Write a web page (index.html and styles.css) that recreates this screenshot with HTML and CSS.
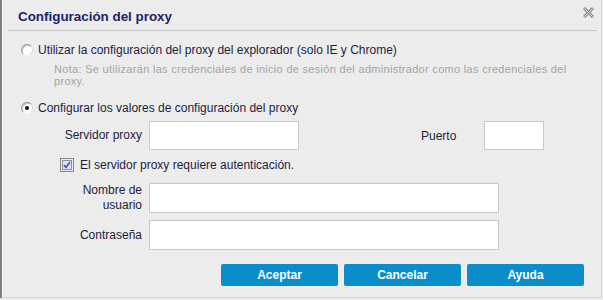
FILE: index.html
```html
<!DOCTYPE html>
<html lang="es">
<head>
    <meta charset="UTF-8">
    <meta name="viewport" content="width=device-width, initial-scale=1.0">
    <title>Configuración del proxy</title>
    <link rel="stylesheet" href="styles.css">
</head>
<body>
    <div class="dialog">
        <div class="dialog-header">
            <h1 class="dialog-title">Configuración del proxy</h1>
            <button class="close-btn" title="Cerrar">
                <svg width="11" height="11" viewBox="0 0 11 11">
                    <path d="M1 1 L10 10 M10 1 L1 10" stroke="#8a8a8a" stroke-width="3" fill="none"/>
                    <path d="M1.5 1.5 L9.5 9.5 M9.5 1.5 L1.5 9.5" stroke="#e4e4e4" stroke-width="1" fill="none"/>
                </svg>
            </button>
        </div>

        <div class="dialog-body">
            <label class="option">
                <span class="radio"></span>
                Utilizar la configuración del proxy del explorador (solo IE y Chrome)
            </label>
            <p class="note">Nota: Se utilizarán las credenciales de inicio de sesión del administrador como las credenciales del proxy.</p>

            <label class="option option-custom">
                <span class="radio checked"></span>
                Configurar los valores de configuración del proxy
            </label>

            <div class="field-row row-server">
                <label class="field-label">Servidor proxy</label>
                <input class="text-input input-server" type="text">
                <label class="port-label">Puerto</label>
                <input class="text-input input-port" type="text">
            </div>

            <label class="check-row">
                <span class="checkbox">
                    <svg width="14" height="14" viewBox="0 0 14 14">
                        <rect x="0.5" y="0.5" width="13" height="13" fill="none" stroke="#222" stroke-width="1" stroke-dasharray="1 1"/>
                        <rect x="2.5" y="2.5" width="9" height="9" fill="#dfe3ee" stroke="#8e8f99" stroke-width="1"/>
                        <path d="M4 7 L6 9.5 L10 4" stroke="#3c56a8" stroke-width="1.6" fill="none"/>
                    </svg>
                </span>
                El servidor proxy requiere autenticación.
            </label>

            <div class="field-row row-user">
                <label class="field-label">Nombre de usuario</label>
                <input class="text-input input-wide" type="text">
            </div>

            <div class="field-row row-pass">
                <label class="field-label">Contraseña</label>
                <input class="text-input input-wide" type="password">
            </div>

            <div class="button-row">
                <button class="btn">Aceptar</button>
                <button class="btn">Cancelar</button>
                <button class="btn">Ayuda</button>
            </div>
        </div>
    </div>
</body>
</html>
```

FILE: styles.css
```css
body {
    margin: 0;
    padding: 0;
    background-color: #ececec;
    border-left: 2px solid #7f7f7f;
    font-family: "Liberation Sans", Arial, sans-serif;
    color: #1e1e3c;
    overflow: hidden;
}

.dialog {
    box-sizing: border-box;
    width: 600px;
    height: 298px;
    background: #ececec;
    border-left: 1px solid #f9f9f9;
    border-right: 1px solid #d4d4d4;
    border-bottom: 1px solid #d4d4d4;
}

.dialog-header {
    display: flex;
    justify-content: space-between;
    align-items: flex-start;
    height: 30px;
    margin: 0 4px 0 5px;
    border-bottom: 1px solid #c8c8c8;
}

.dialog-title {
    margin: 0;
    padding: 9px 0 0 10px;
    font-size: 13.4px;
    line-height: 16px;
    font-weight: bold;
    color: #1b2468;
}

.close-btn {
    margin: 7px 3px 0 0;
    padding: 0;
    border: none;
    background: none;
    width: 11px;
    height: 11px;
    cursor: pointer;
}

.close-btn svg {
    display: block;
}

.dialog-body {
    padding: 12px 17px 0 18px;
}

.option {
    display: flex;
    align-items: center;
    font-size: 12px;
    line-height: 14px;
}

.option-custom {
    margin-top: 14px;
}

.radio {
    box-sizing: border-box;
    width: 12px;
    height: 12px;
    margin-right: 5px;
    border-radius: 50%;
    border: 1px solid;
    border-color: #8d8d8d #d8d8d8 #f4f4f4 #9a9a9a;
    background: #fff;
    box-shadow: inset 1px 1px 0 #c8c8c8;
    position: relative;
}

.radio.checked::after {
    content: "";
    position: absolute;
    left: 3px;
    top: 3px;
    width: 4px;
    height: 4px;
    border-radius: 50%;
    background: #111;
}

.note {
    width: 526px;
    margin: 6px 0 0 33px;
    font-size: 11px;
    line-height: 12px;
    letter-spacing: 0.3px;
    color: #a3a3a3;
}

.field-row {
    display: flex;
    align-items: center;
    font-size: 12px;
}

.field-label {
    width: 80px;
    margin-left: 41px;
    margin-right: 7px;
    text-align: right;
    line-height: 15px;
}

.text-input {
    box-sizing: border-box;
    height: 30px;
    margin: 0;
    padding: 0 4px;
    border: 1px solid #c8c8c8;
    background: #fff;
    font-family: inherit;
    font-size: 12px;
    outline: none;
}

.row-server {
    margin-top: 6px;
}

.row-server .text-input {
    height: 29px;
}

.input-server {
    width: 150px;
}

.port-label {
    margin-left: 122px;
    margin-right: 28px;
}

.input-port {
    width: 60px;
}

.check-row {
    display: flex;
    align-items: center;
    height: 16px;
    margin: 7px 0 0 39px;
    font-size: 12px;
}

.checkbox {
    width: 14px;
    height: 14px;
    margin-right: 6px;
}

.checkbox svg {
    display: block;
}

.row-user {
    margin-top: 10px;
}

.row-pass {
    margin-top: 7px;
}

.input-wide {
    width: 350px;
}

.button-row {
    display: flex;
    justify-content: flex-end;
    gap: 6px;
    margin-top: 14px;
}

.btn {
    width: 117px;
    height: 22px;
    padding: 0;
    border: none;
    border-radius: 2px;
    background-color: #0b8dcc;
    color: #fff;
    font-family: "Liberation Sans", Arial, sans-serif;
    font-size: 12px;
    font-weight: bold;
    cursor: pointer;
}

.btn:hover {
    background-color: #0a7fb8;
}
```
